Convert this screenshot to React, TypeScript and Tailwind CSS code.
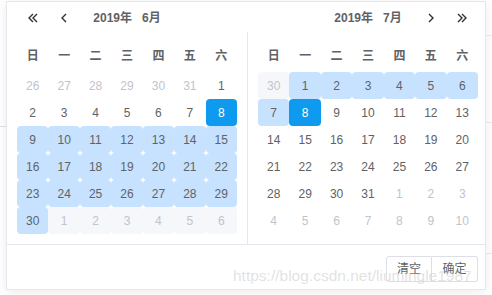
import React from 'react'

type Cell = { d: number; kind: 'prev' | 'cur' | 'next'; state?: 'range' | 'sel' | 'muted' }

const weekdays = ['日', '一', '二', '三', '四', '五', '六']

const june: Cell[] = [
  ...[26, 27, 28, 29, 30, 31].map((d) => ({ d, kind: 'prev' as const })),
  { d: 1, kind: 'cur' },
  ...[2, 3, 4, 5, 6, 7].map((d) => ({ d, kind: 'cur' as const })),
  { d: 8, kind: 'cur', state: 'sel' },
  ...Array.from({ length: 22 }, (_, i) => ({ d: i + 9, kind: 'cur' as const, state: 'range' as const })),
  ...[1, 2, 3, 4, 5, 6].map((d) => ({ d, kind: 'next' as const, state: 'muted' as const })),
]

const july: Cell[] = [
  { d: 30, kind: 'prev', state: 'muted' },
  ...[1, 2, 3, 4, 5, 6, 7].map((d) => ({ d, kind: 'cur' as const, state: 'range' as const })),
  { d: 8, kind: 'cur', state: 'sel' },
  ...Array.from({ length: 23 }, (_, i) => ({ d: i + 9, kind: 'cur' as const })),
  ...[1, 2, 3, 4, 5, 6, 7, 8, 9, 10].map((d) => ({ d, kind: 'next' as const })),
]

function DayCell({ c }: { c: Cell }) {
  let cls = 'text-[#606266]'
  if (c.kind !== 'cur') cls = 'text-[#c0c4cc]'
  let bg = ''
  if (c.state === 'range') bg = 'bg-[#c6e2ff] rounded-[4px]'
  if (c.state === 'muted') bg = 'bg-[#f5f7fa] rounded-[4px]'
  if (c.state === 'sel') {
    bg = 'bg-[#0e9bef] rounded-[4px]'
    cls = 'text-white'
  }
  return (
    <div className={`h-[27px] flex items-center justify-center text-[12px] ${bg} ${cls}`}>{c.d}</div>
  )
}

function Chev({ dir, double }: { dir: 'l' | 'r'; double?: boolean }) {
  const one = dir === 'l' ? 'M7 2 L3 6 L7 10' : 'M3 2 L7 6 L3 10'
  return (
    <svg width={double ? 14 : 10} height="12" viewBox={double ? '0 0 14 12' : '0 0 10 12'} fill="none" stroke="#303133" strokeWidth="1.4">
      <path d={one} />
      {double && <path d={one} transform="translate(4 0)" />}
    </svg>
  )
}

function Title({ month }: { month: number }) {
  return (
    <div className="col-span-3 flex items-center justify-center text-[12px] font-bold text-[#606266]">
      <span>2019年</span>
      <span className="ml-[10px]">{month}月</span>
    </div>
  )
}

function Grid({ cells }: { cells: Cell[] }) {
  return (
    <div className="w-[220px]">
      <div className="grid grid-cols-7 h-[28px] mt-[10px] mb-[2px]">
        {weekdays.map((w) => (
          <div key={w} className="flex items-center justify-center text-[12px] font-semibold text-[#606266]">
            {w}
          </div>
        ))}
      </div>
      <div className="grid grid-cols-7">
        {cells.map((c, i) => (
          <DayCell key={i} c={c} />
        ))}
      </div>
    </div>
  )
}

export default function App() {
  return (
    <div
      className="w-[492px] h-[295px] bg-white overflow-hidden relative flex"
      style={{ fontFamily: '"Liberation Sans", "Noto Sans CJK SC", Arial, sans-serif' }}
    >
      <div className="w-[6px] pt-[126px]">
        <div className="h-px bg-[#e2e2e2]" />
      </div>

      <div className="mt-[1px] w-[480px] h-[289px] border border-[#e4e7ed] bg-white shadow-[0_2px_12px_rgba(0,0,0,0.08)] flex flex-col">
        <div className="flex h-[30px]">
          <div className="w-[240px] pl-[10px] pr-[10px] pt-[1px]">
            <div className="grid grid-cols-7 w-[220px] h-[30px]">
              <div className="flex items-center justify-center">
                <Chev dir="l" double />
              </div>
              <div className="flex items-center justify-center">
                <Chev dir="l" />
              </div>
              <Title month={6} />
            </div>
          </div>
          <div className="pl-[11px] pt-[1px]">
            <div className="grid grid-cols-7 w-[220px] h-[30px]">
              <div />
              <div />
              <Title month={7} />
              <div className="flex items-center justify-center">
                <Chev dir="r" />
              </div>
              <div className="flex items-center justify-center">
                <Chev dir="r" double />
              </div>
            </div>
          </div>
        </div>

        <div className="flex h-[212px]">
          <div className="w-[240px] pl-[10px]">
            <Grid cells={june} />
          </div>
          <div className="border-l border-[#e4e7ed] pl-[10px]">
            <Grid cells={july} />
          </div>
        </div>

        <div className="border-t border-[#e4e7ed] flex-1 flex justify-end items-start pt-[11px] pr-[7px]">
          <button className="w-[46px] h-[26px] border border-[#dcdfe6] bg-white text-[12px] text-[#606266] rounded-l-[3px]">
            清空
          </button>
          <button className="w-[46px] h-[26px] border border-l-0 border-[#dcdfe6] bg-white text-[12px] text-[#606266] rounded-r-[3px]">
            确定
          </button>
        </div>
      </div>

      <div className="flex-1 flex flex-col">
        <div className="h-[35px]" />
        <div className="h-px bg-[#e6e6e6]" />
        <div className="h-[86px]" />
        <div className="h-px bg-[#e6e6e6]" />
        <div className="h-[130px]" />
        <div className="h-px bg-[#e6e6e6]" />
      </div>

      <div className="absolute left-[233px] top-[267px] text-[15.5px] leading-[18px] text-[rgba(190,190,190,0.45)] whitespace-nowrap pointer-events-none">
        https://blog.csdn.net/liumingle1987
      </div>
    </div>
  )
}
